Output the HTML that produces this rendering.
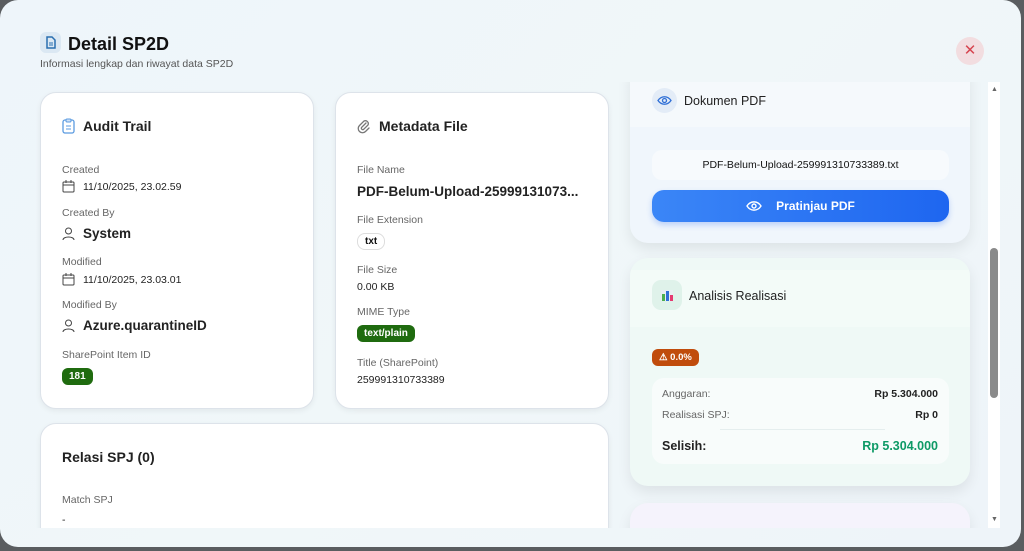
<!DOCTYPE html>
<html><head><meta charset="utf-8"><style>
*{box-sizing:border-box;margin:0;padding:0}
body{width:1024px;height:551px;background:#5a5d60;font-family:"Liberation Sans",sans-serif;overflow:hidden;position:relative;color:#111}
.modal{position:absolute;left:0;top:0;width:1021px;height:547px;background:linear-gradient(135deg,#eef5fa,#f0f7f9 50%,#eef4f9);border-radius:18px;overflow:hidden}
.hicon{position:absolute;left:40px;top:32px;width:21px;height:21px;border-radius:6px;background:#dbe8f3}
h1{position:absolute;left:68px;top:34px;font-size:18px;font-weight:bold;color:#111}
.sub{position:absolute;left:40px;top:58px;font-size:10.5px;color:#555}
.close{position:absolute;left:956px;top:37px;width:28px;height:28px;border-radius:50%;background:#f2dde0;color:#d64550;font-size:15px;text-align:center;line-height:27px}
.card{position:absolute;background:#fff;border:1px solid #dde3ea;border-radius:16px;box-shadow:0 2px 6px rgba(0,0,0,.06)}
.ct{position:absolute;font-size:14px;font-weight:bold;color:#222;display:flex;align-items:center;gap:8px}
.l{position:absolute;font-size:10.5px;color:#666}
.v{position:absolute;font-size:10.5px;color:#222;display:flex;align-items:center;gap:8px}
.vb{position:absolute;font-size:13.5px;font-weight:bold;color:#222;display:flex;align-items:center;gap:8px}
.badge{position:absolute;background:#1f6b0f;color:#fff;font-size:10px;font-weight:bold;border-radius:6px;padding:3px 7px}
.rc{position:absolute;border-radius:18px;box-shadow:0 6px 14px rgba(0,0,0,.08)}
.clip{position:absolute;left:0;top:82px;width:988px;height:446px;overflow:hidden}
.clip>*{margin-top:-82px}
.scroll{position:absolute;left:988px;top:82px;width:12px;height:446px;background:#fff}
.thumb{position:absolute;left:990px;top:248px;width:8px;height:150px;background:#8a8a8a;border-radius:4px}
</style></head><body>
<div class="modal">
<div class="hicon"><svg width="21" height="21" viewBox="0 0 21 21"><path d="M7 5h5l3 3v8H7z" fill="none" stroke="#2a6fb0" stroke-width="1.5"/><path d="M9 11h4M9 13h4" stroke="#2a6fb0" stroke-width="1"/></svg></div>
<h1>Detail SP2D</h1>
<div class="sub">Informasi lengkap dan riwayat data SP2D</div>
<div class="close">✕</div>

<div class="clip"><div style="position:relative;width:988px;height:600px">
<div class="card" style="left:40px;top:92px;width:274px;height:317px"></div>
<div class="ct" style="left:62px;top:118px"><svg width="13" height="16" viewBox="0 0 13 16"><rect x="1" y="2" width="11" height="13" rx="2" fill="none" stroke="#5b9be0" stroke-width="1.3"/><rect x="4" y="1" width="5" height="3" rx="1" fill="#cfe2f7" stroke="#5b9be0"/><path d="M4 8h5M4 11h5" stroke="#5b9be0"/></svg>Audit Trail</div>
<div class="l" style="left:62px;top:164px">Created</div>
<div class="v" style="left:62px;top:180px"><svg width="13" height="13" viewBox="0 0 13 13"><rect x="1" y="2" width="11" height="10" rx="1" fill="none" stroke="#444"/><path d="M1 5h11M4 0v3M9 0v3" stroke="#444"/></svg>11/10/2025, 23.02.59</div>
<div class="l" style="left:62px;top:207px">Created By</div>
<div class="vb" style="left:62px;top:226px"><svg width="13" height="14" viewBox="0 0 13 14"><circle cx="6.5" cy="4" r="3" fill="none" stroke="#444"/><path d="M1 13c0-4 11-4 11 0" fill="none" stroke="#444"/></svg>System</div>
<div class="l" style="left:62px;top:256px">Modified</div>
<div class="v" style="left:62px;top:273px"><svg width="13" height="13" viewBox="0 0 13 13"><rect x="1" y="2" width="11" height="10" rx="1" fill="none" stroke="#444"/><path d="M1 5h11M4 0v3M9 0v3" stroke="#444"/></svg>11/10/2025, 23.03.01</div>
<div class="l" style="left:62px;top:299px">Modified By</div>
<div class="vb" style="left:62px;top:318px"><svg width="13" height="14" viewBox="0 0 13 14"><circle cx="6.5" cy="4" r="3" fill="none" stroke="#444"/><path d="M1 13c0-4 11-4 11 0" fill="none" stroke="#444"/></svg>Azure.quarantineID</div>
<div class="l" style="left:62px;top:349px">SharePoint Item ID</div>
<div class="badge" style="left:62px;top:368px">181</div>

<div class="card" style="left:335px;top:92px;width:274px;height:317px"></div>
<div class="ct" style="left:357px;top:118px"><svg width="14" height="15" viewBox="0 0 14 15"><path d="M9 4L4.5 8.5a1.5 1.5 0 0 0 2 2L11 6a3 3 0 0 0-4-4L2.5 6.5a4.2 4.2 0 0 0 6 6L12 9" fill="none" stroke="#777" stroke-width="1.3" stroke-linecap="round"/></svg>Metadata File</div>
<div class="l" style="left:357px;top:164px">File Name</div>
<div class="vb" style="left:357px;top:184px">PDF-Belum-Upload-25999131073...</div>
<div class="l" style="left:357px;top:214px">File Extension</div>
<div style="position:absolute;left:357px;top:233px;border:1px solid #ddd;border-radius:8px;padding:2px 7px;font-size:10px;font-weight:bold">txt</div>
<div class="l" style="left:357px;top:264px">File Size</div>
<div class="v" style="left:357px;top:281px">0.00 KB</div>
<div class="l" style="left:357px;top:306px">MIME Type</div>
<div class="badge" style="left:357px;top:325px">text/plain</div>
<div class="l" style="left:357px;top:357px">Title (SharePoint)</div>
<div class="v" style="left:357px;top:374px">259991310733389</div>

<div class="card" style="left:40px;top:423px;width:569px;height:140px"></div>
<div class="ct" style="left:62px;top:449px">Relasi SPJ (0)</div>
<div class="l" style="left:62px;top:494px">Match SPJ</div>
<div class="v" style="left:62px;top:514px">-</div>

<div class="rc" style="left:630px;top:60px;width:340px;height:183px;background:#f0f6fc;overflow:hidden"><div style="position:absolute;left:0;top:0;width:340px;height:67px;background:#f5f9fc"></div></div>
<div style="position:absolute;left:652px;top:88px;width:25px;height:25px;border-radius:50%;background:#e3ecf7"><svg width="25" height="25" viewBox="0 0 25 25"><path d="M6 12.5c3.5-5 9.5-5 13 0c-3.5 5-9.5 5-13 0z" fill="none" stroke="#2f6fd6" stroke-width="1.3"/><circle cx="12.5" cy="12.5" r="2" fill="none" stroke="#2f6fd6" stroke-width="1.3"/></svg></div>
<div class="ct" style="left:684px;top:94px;font-size:12.5px;font-weight:normal">Dokumen PDF</div>
<div style="position:absolute;left:652px;top:150px;width:297px;height:30px;border-radius:10px;background:#f7fafd;font-size:10.5px;text-align:center;line-height:30px">PDF-Belum-Upload-259991310733389.txt</div>
<div style="position:absolute;left:652px;top:190px;width:297px;height:32px;border-radius:12px;background:linear-gradient(90deg,#3b86f7,#1e66f0);color:#fff;font-size:12px;font-weight:bold;display:flex;align-items:center;justify-content:center;gap:14px;box-shadow:0 3px 6px rgba(30,100,240,.25)"><svg width="16" height="12" viewBox="0 0 16 12"><path d="M1 6c3.5-5.5 10.5-5.5 14 0c-3.5 5.5-10.5 5.5-14 0z" fill="none" stroke="#fff" stroke-width="1.4"/><circle cx="8" cy="6" r="2" fill="none" stroke="#fff" stroke-width="1.4"/></svg>Pratinjau PDF</div>

<div class="rc" style="left:630px;top:258px;width:340px;height:228px;background:#eff9f6;overflow:hidden"><div style="position:absolute;left:0;top:12px;width:340px;height:57px;background:#f3fbf8"></div></div>
<div style="position:absolute;left:652px;top:280px;width:30px;height:30px;border-radius:9px;background:#dff2ea"><svg width="30" height="30" viewBox="0 0 30 30"><rect x="9" y="10" width="12" height="11" fill="#e8eef2"/><rect x="10" y="14" width="3" height="7" fill="#4caf50"/><rect x="14" y="11" width="3" height="10" fill="#2f6fd6"/><rect x="18" y="15" width="3" height="6" fill="#e53970"/></svg></div>
<div class="ct" style="left:689px;top:289px;font-size:12.5px;font-weight:normal">Analisis Realisasi</div>
<div style="position:absolute;left:652px;top:349px;background:#c04c0c;color:#fff;font-size:9.5px;font-weight:bold;border-radius:6px;padding:3px 7px">⚠ 0.0%</div>
<div style="position:absolute;left:652px;top:378px;width:297px;height:86px;border-radius:12px;background:#f8fcfb"></div>
<div class="l" style="left:662px;top:388px">Anggaran:</div>
<div class="v" style="right:50px;top:388px;font-weight:bold">Rp 5.304.000</div>
<div class="l" style="left:662px;top:409px">Realisasi SPJ:</div>
<div class="v" style="right:50px;top:409px;font-weight:bold">Rp 0</div>
<div style="position:absolute;left:720px;top:429px;width:165px;height:1px;background:#e5eeee"></div>
<div class="vb" style="left:662px;top:439px;font-size:12.5px">Selisih:</div>
<div class="vb" style="right:50px;top:439px;font-size:12.5px;color:#0e9a66">Rp 5.304.000</div>

<div class="rc" style="left:630px;top:503px;width:340px;height:60px;background:#f5f3fc"></div>
</div></div>

<div class="scroll"></div>
<div class="thumb"></div>
<div style="position:absolute;left:991px;top:86px;font-size:7px;color:#666">▲</div>
<div style="position:absolute;left:991px;top:516px;font-size:7px;color:#666">▼</div>
</div>
</body></html>
